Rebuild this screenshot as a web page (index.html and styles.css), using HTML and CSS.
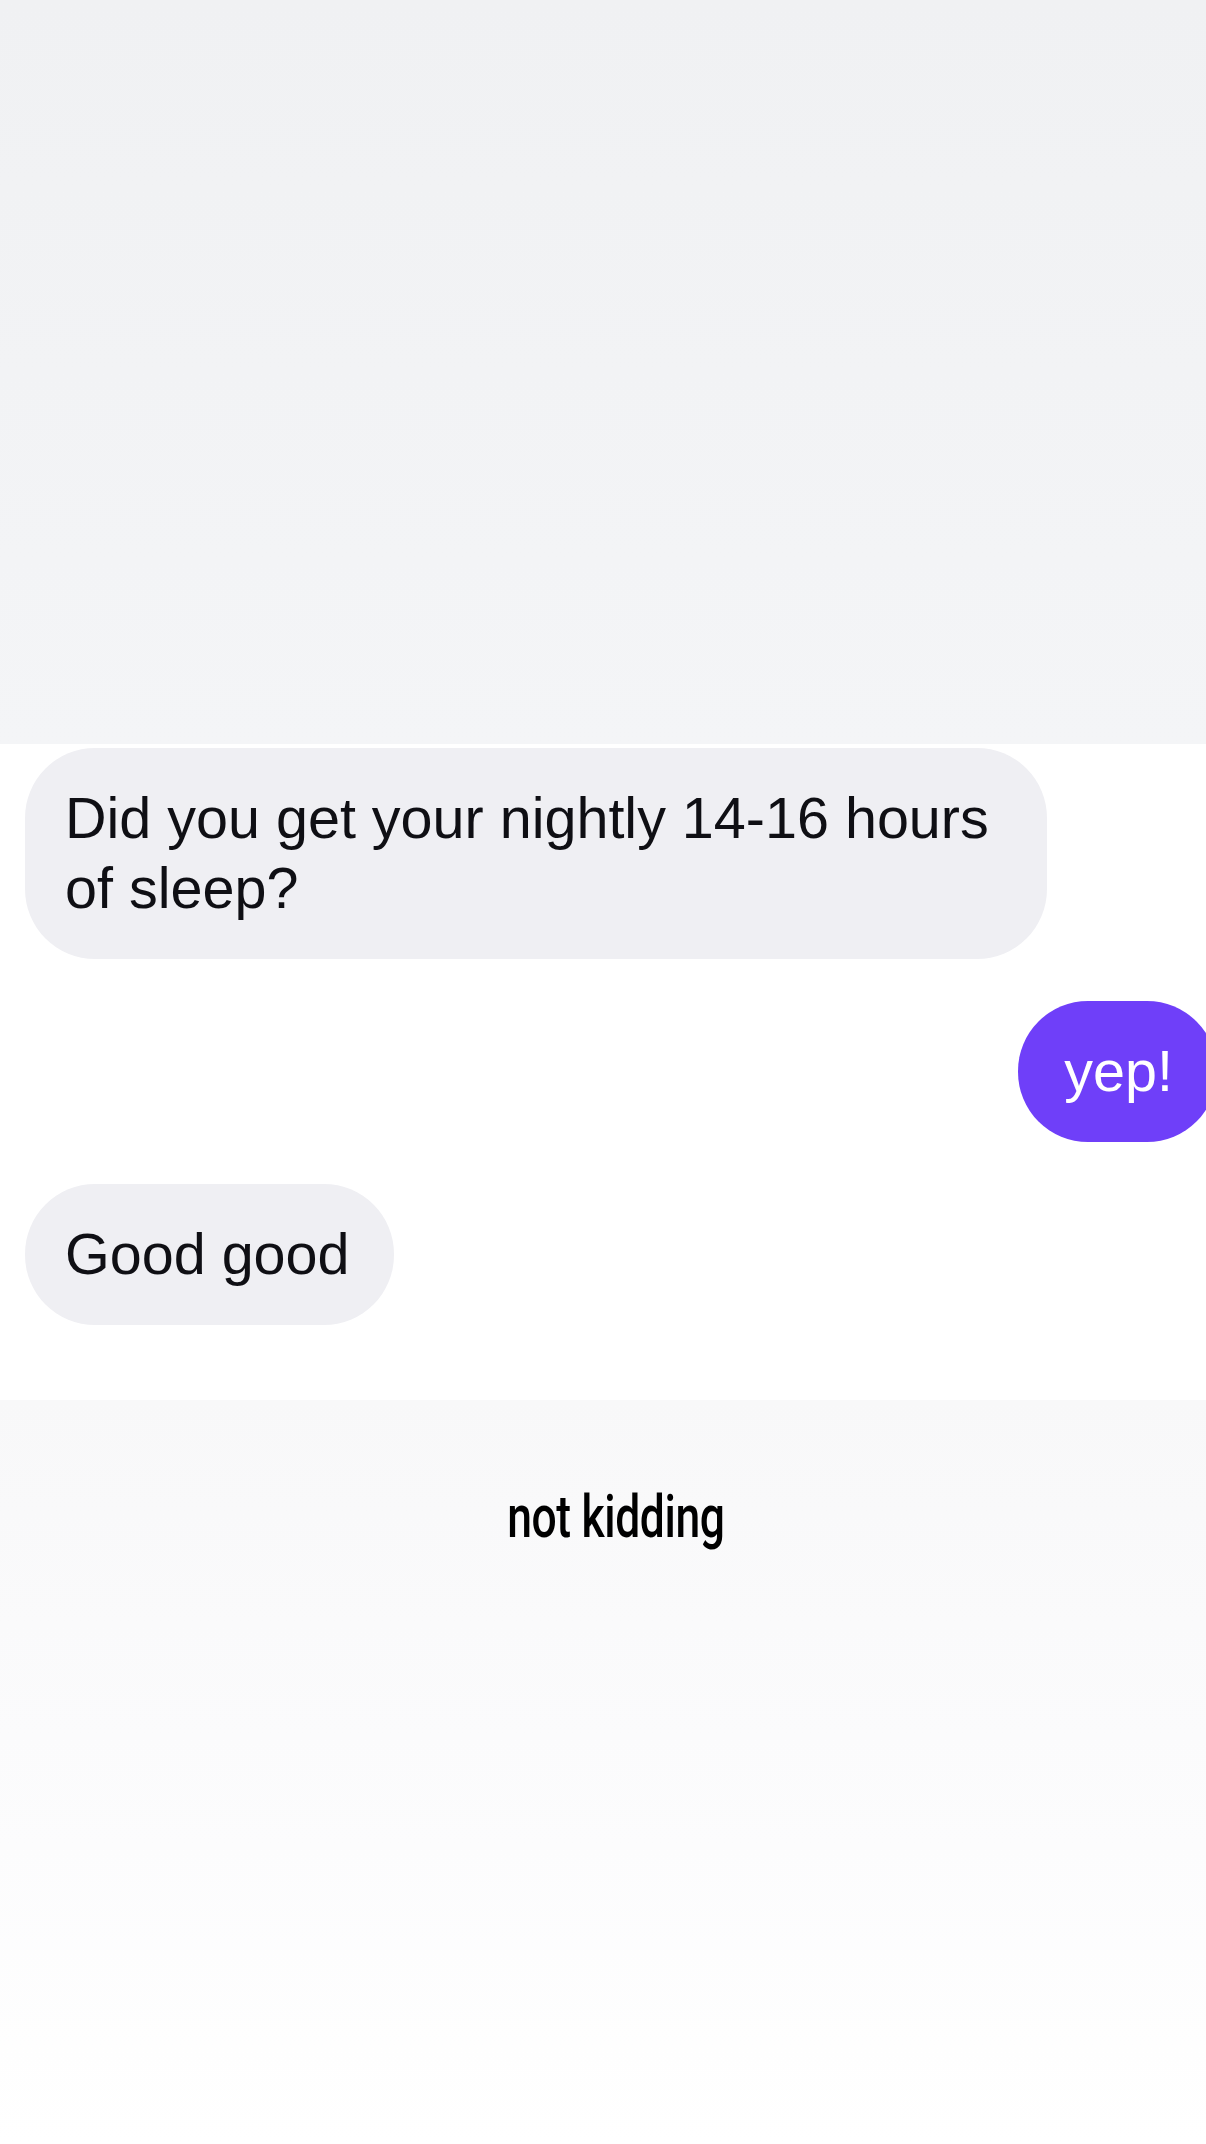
FILE: index.html
```html
<!DOCTYPE html>
<html lang="en">
<head>
<meta charset="utf-8">
<title>Chat</title>
<link rel="stylesheet" href="styles.css">
</head>
<body>
<div class="page">
  <div class="top-area"></div>
  <div class="thread">
    <div class="bubble incoming">Did you get your nightly 14-16 hours of sleep?</div>
    <div class="bubble outgoing">yep!</div>
    <div class="bubble incoming">Good good</div>
  </div>
  <div class="bottom-area">
    <div class="caption"><span class="caption-text">not kidding</span></div>
  </div>
</div>
</body>
</html>
```
FILE: styles.css
```css
* { box-sizing: border-box; }
html, body {
  margin: 0;
  padding: 0;
  background: #ffffff;
  overflow-x: hidden;
}
.page {
  width: 1206px;
  height: 2144px;
  display: flex;
  flex-direction: column;
  font-family: "Liberation Sans", Arial, sans-serif;
}
.top-area {
  height: 744px;
  background: linear-gradient(#f0f1f3, #f4f5f7);
}
.thread {
  display: flex;
  flex-direction: column;
  align-items: flex-start;
  gap: 42px;
  padding: 4px 0 75px 25px;
  background: #ffffff;
}
.bubble {
  font-size: 57.5px;
  line-height: 70px;
  padding: 35px 44px 36px 40px;
  border-radius: 70px;
  max-width: 1022px;
}
.incoming {
  background: #efeff3;
  color: #0f0f14;
}
.outgoing {
  background: #6f3ff9;
  color: #ffffff;
  align-self: flex-end;
  margin-right: -11px;
  padding-left: 46px;
}
.bottom-area {
  flex: 1;
  background: linear-gradient(#f8f8f9 0%, #fcfcfd 60%, #fefefe 87%, #ffffff 100%);
}
.caption {
  display: flex;
  justify-content: center;
  padding-top: 82px;
  padding-left: 26px;
}
.caption-text {
  display: inline-block;
  font-family: Roboto, "Liberation Sans", sans-serif;
  font-weight: 500;
  font-size: 60px;
  line-height: 70px;
  color: #000000;
  transform: scaleX(0.74);
  letter-spacing: -0.5px;
}
```
